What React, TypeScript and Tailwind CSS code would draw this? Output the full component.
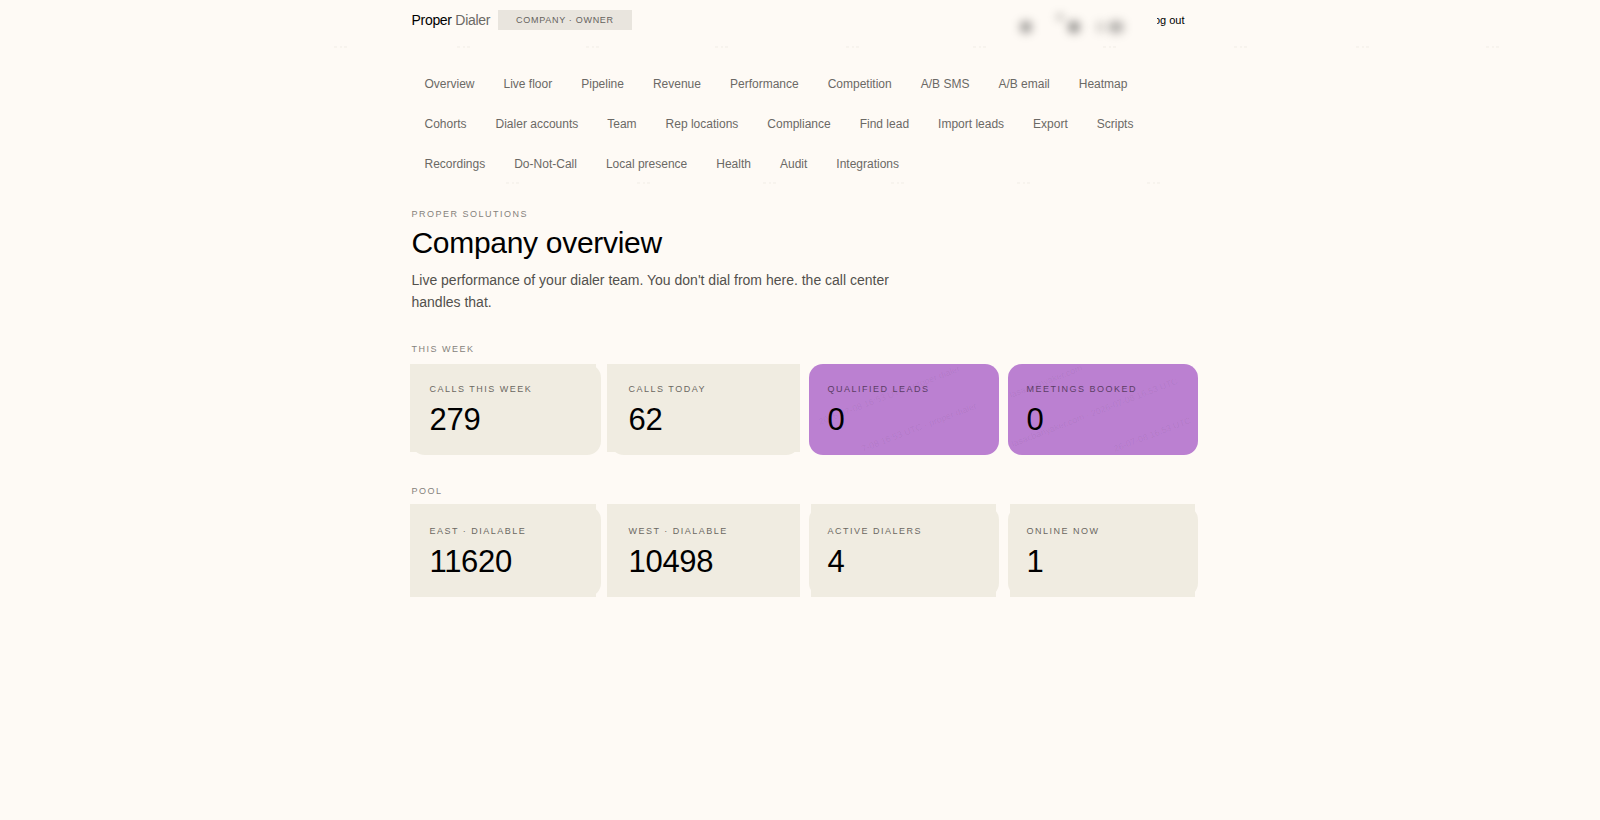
import React from 'react';

interface MarkLine {
  x: number;
  y: number;
  text: string;
}

interface Stat {
  label: string;
  value: number;
  shape?: string;
  marks?: MarkLine[];
}

const navItems = [
  'Overview', 'Live floor', 'Pipeline', 'Revenue', 'Performance', 'Competition', 'A/B SMS', 'A/B email', 'Heatmap',
  'Cohorts', 'Dialer accounts', 'Team', 'Rep locations', 'Compliance', 'Find lead', 'Import leads', 'Export', 'Scripts',
  'Recordings', 'Do-Not-Call', 'Local presence', 'Health', 'Audit', 'Integrations',
];

// shape = square backing behind the rounded tile
const weekStats: Stat[] = [
  { label: 'Calls this week', value: 279, shape: '-left-px right-[5px] top-0 bottom-[3px]' },
  { label: 'Calls today', value: 62, shape: '-left-[3px] right-0 top-0 bottom-[3px]' },
  {
    label: 'Qualified leads',
    value: 0,
    marks: [
      { x: 11, y: 61, text: '2026-07-08 16:53 UTC · proper dialer' },
      { x: 54, y: 88, text: '7-08 16:53 UTC · proper dialer' },
    ],
  },
  {
    label: 'Meetings booked',
    value: 0,
    marks: [
      { x: 3, y: 34, text: 'lasacbanyaker.com' },
      { x: 5, y: 83, text: 'lasacbanyaker.com · 2026-07-08 16:53 UTC' },
      { x: 107, y: 88, text: '26-07-08 16:53 UTC' },
    ],
  },
];

const poolStats: Stat[] = [
  { label: 'East · dialable', value: 11620, shape: '-left-px right-[5px] -top-[2px] bottom-0' },
  { label: 'West · dialable', value: 10498, shape: '-left-[3px] right-0 -top-[2px] bottom-0' },
  { label: 'Active dialers', value: 4, shape: 'left-[2px] right-[3px] -top-[2px] bottom-0' },
  { label: 'Online now', value: 1, shape: 'left-[2px] right-[3px] -top-[2px] bottom-0' },
];

const Ticks: React.FC<{ xs: number[] }> = ({ xs }) => (
  <svg className="block h-0.5 w-full" aria-hidden="true">
    {xs.map(x => (
      <path key={x} d={`M${x} 1h3m3 0h2m2 0h3`} stroke="#f1ede6" strokeWidth="1" />
    ))}
  </svg>
);

const Watermark: React.FC<{ lines: MarkLine[] }> = ({ lines }) => (
  <svg className="absolute inset-0 h-full w-full" aria-hidden="true">
    {lines.map(l => (
      <text key={l.y} transform={`translate(${l.x} ${l.y}) rotate(-21)`} fontSize="9" fill="#000" fillOpacity="0.06">{l.text}</text>
    ))}
  </svg>
);

const StatCard: React.FC<{ stat: Stat }> = ({ stat }) => (
  <div className={`relative rounded-[14px] ${stat.marks ? 'overflow-hidden bg-[#bb80d1]' : 'bg-[#f0ece1]'}`}>
    {stat.shape && <span className={`absolute bg-[#f0ece1] ${stat.shape}`} />}
    {stat.marks && <Watermark lines={stat.marks} />}
    <div className="relative px-[19px] pt-[19px] pb-[17px]">
      <dt className={`text-[9px] leading-3 uppercase tracking-[1.5px] ${stat.marks ? 'text-[#5b3d66]' : 'text-[#6b6862]'}`}>{stat.label}</dt>
      <dd className="mt-[7px] text-[31px] leading-9 tracking-[-0.3px] text-black">{stat.value}</dd>
    </div>
  </div>
);

const StatSection: React.FC<{ title: string; stats: Stat[] }> = ({ title, stats }) => (
  <section className="mt-[30px]">
    <h2 className="pl-px text-[9px] leading-3 uppercase tracking-[1.5px] text-[#85827c]">{title}</h2>
    <dl className="mt-[9px] grid grid-cols-2 gap-[9px] sm:grid-cols-4">
      {stats.map(s => <StatCard key={s.label} stat={s} />)}
    </dl>
  </section>
);

const App: React.FC = () => (
  <div className="min-h-screen bg-[#fefaf5] pl-2 font-['Liberation_Sans',Arial,sans-serif]">
    <header className="mx-auto flex h-[46px] max-w-[787px] items-center pb-[6px] pl-px">
      <a href="#" className="text-[14px] tracking-[-0.3px] text-[#6b6965]">
        <span className="text-black">Proper</span> Dialer
      </a>
      <span className="ml-2 bg-[#e9e5de] px-[18px] text-[9px] leading-5 uppercase tracking-[0.7px] text-[#65625d]">Company · Owner</span>
      <span className="ml-auto flex h-[26px] items-end gap-4 pr-[30px]" aria-hidden="true">
        <span className="size-3 rounded-full bg-black/40 blur-[5px]" />
        <span className="ml-2 flex items-end">
          <span className="mb-3 size-2 rounded-full bg-black/20 blur-[4px]" />
          <span className="ml-1 size-3 rounded-full bg-black/45 blur-[5px]" />
          <span className="ml-4 h-3 w-2 rounded-full bg-black/15 blur-[4px]" />
          <span className="ml-1 h-3 w-4 rounded-full bg-black/30 blur-[5px]" />
        </span>
      </span>
      <button
        type="button"
        aria-label="Log out"
        className="relative mr-[13px] text-[11px] text-black before:absolute before:inset-y-0 before:left-0 before:w-[3px] before:bg-[#fefaf5]"
      >
        og out
      </button>
    </header>
    <Ticks xs={[326, 449, 578, 707, 838, 965, 1095, 1226, 1348, 1478]} />

    <div className="mx-auto max-w-[787px]">
      <nav className="flex flex-wrap gap-x-px gap-y-1 pt-[18px]">
        {navItems.map(item => (
          <a key={item} href="#" className="px-[14px] text-[12px] leading-9 text-[#6b6965]">{item}</a>
        ))}
      </nav>
      <Ticks xs={[95, 226, 352, 480, 606, 736]} />

      <main className="pt-6">
        <p className="pl-px text-[9px] leading-3 uppercase tracking-[1.5px] text-[#85827c]">Proper Solutions</p>
        <h1 className="mt-[5px] pl-px text-[30px] leading-9 tracking-[-0.3px] text-black">Company overview</h1>
        <p className="mt-2 max-w-[500px] pl-px text-[14px] leading-[22px] text-[#52504c]">
          Live performance of your dialer team. You don't dial from here. the call center handles that.
        </p>
        <StatSection title="This week" stats={weekStats} />
        <StatSection title="Pool" stats={poolStats} />
      </main>
    </div>
  </div>
);

export default App;
